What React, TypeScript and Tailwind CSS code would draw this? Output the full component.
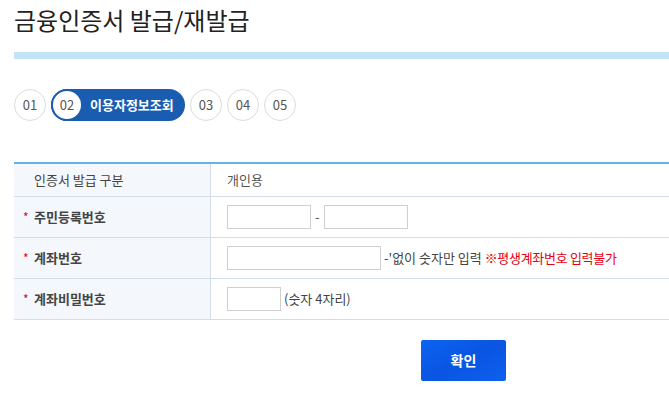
import React from 'react';

const font = { fontFamily: '"Noto Sans CJK KR", "Noto Sans", sans-serif' };

function Step({ n }: { n: string }) {
  return (
    <div className="flex items-center justify-center w-8 h-8 rounded-full border border-[#dcdcdc] bg-white text-[13px] text-[#555]">
      {n}
    </div>
  );
}

function Row({ label, required, bold, children, h }: { label: string; required?: boolean; bold?: boolean; children: React.ReactNode; h: string }) {
  return (
    <div className={`flex border-b border-[#d3dee8] ${h}`}>
      <div className="w-[197px] shrink-0 bg-[#f4f7fb] border-r border-[#d3dee8] flex items-center pl-[9px] text-[13px]">
        <span className="w-[11px] text-[#e60012] text-[12px]">{required ? '*' : ''}</span>
        <span className={bold ? 'font-bold text-[#444]' : 'text-[#444]'}>{label}</span>
      </div>
      <div className="flex-1 flex items-center pl-[16px] text-[13px] text-[#444] whitespace-nowrap">{children}</div>
    </div>
  );
}

export default function App() {
  return (
    <div className="w-[669px] h-[394px] bg-white overflow-hidden" style={font}>
      {/* Title */}
      <h1 className="pl-[14px] pt-[4px] text-[24px] leading-[32px] text-[#222]">금융인증서 발급/재발급</h1>
      <div className="ml-[14px] mt-[16px] h-[7px] bg-[#c4e4f6]" />

      {/* Steps */}
      <div className="flex items-center gap-[5px] pl-[14px] mt-[30px]">
        <Step n="01" />
        <div className="flex items-center h-8 w-[134px] rounded-full bg-[#1a5db0] whitespace-nowrap">
          <div className="flex items-center justify-center w-8 h-8 shrink-0 rounded-full border-2 border-[#1a5db0] bg-white text-[13px] text-[#555]">02</div>
          <span className="ml-[7px] text-[13px] font-bold text-white">이용자정보조회</span>
        </div>
        <Step n="03" />
        <Step n="04" />
        <Step n="05" />
      </div>

      {/* Form table */}
      <div className="ml-[14px] mt-[41px] border-t-2 border-[#62b3e8]">
        <Row label="인증서 발급 구분" h="h-[33px]">
          <span className="text-[#555]">개인용</span>
        </Row>
        <Row label="주민등록번호" required bold h="h-[41px]">
          <input className="w-[84px] h-[24px] border border-[#cfcfcf]" />
          <span className="mx-[4px] text-[#555]">-</span>
          <input className="w-[84px] h-[24px] border border-[#cfcfcf]" />
        </Row>
        <Row label="계좌번호" required bold h="h-[41px]">
          <input className="w-[154px] h-[24px] border border-[#cfcfcf]" />
          <span className="ml-[3px] text-[#444]">-'없이 숫자만 입력</span>
          <span className="ml-[3px] text-[#e60012] tracking-[-0.3px]">※평생계좌번호 입력불가</span>
        </Row>
        <Row label="계좌비밀번호" required bold h="h-[41px]">
          <input className="w-[54px] h-[24px] border border-[#cfcfcf]" />
          <span className="ml-[3px] text-[#444]">(숫자 4자리)</span>
        </Row>
      </div>

      {/* Button */}
      <div className="flex pl-[421px] mt-[20px]">
        <button className="w-[85px] h-[41px] rounded-[2px] bg-gradient-to-br from-[#0d63f2] via-[#0a55e2] to-[#0d60ee] text-white text-[14px] font-bold">
          확인
        </button>
      </div>
    </div>
  );
}
